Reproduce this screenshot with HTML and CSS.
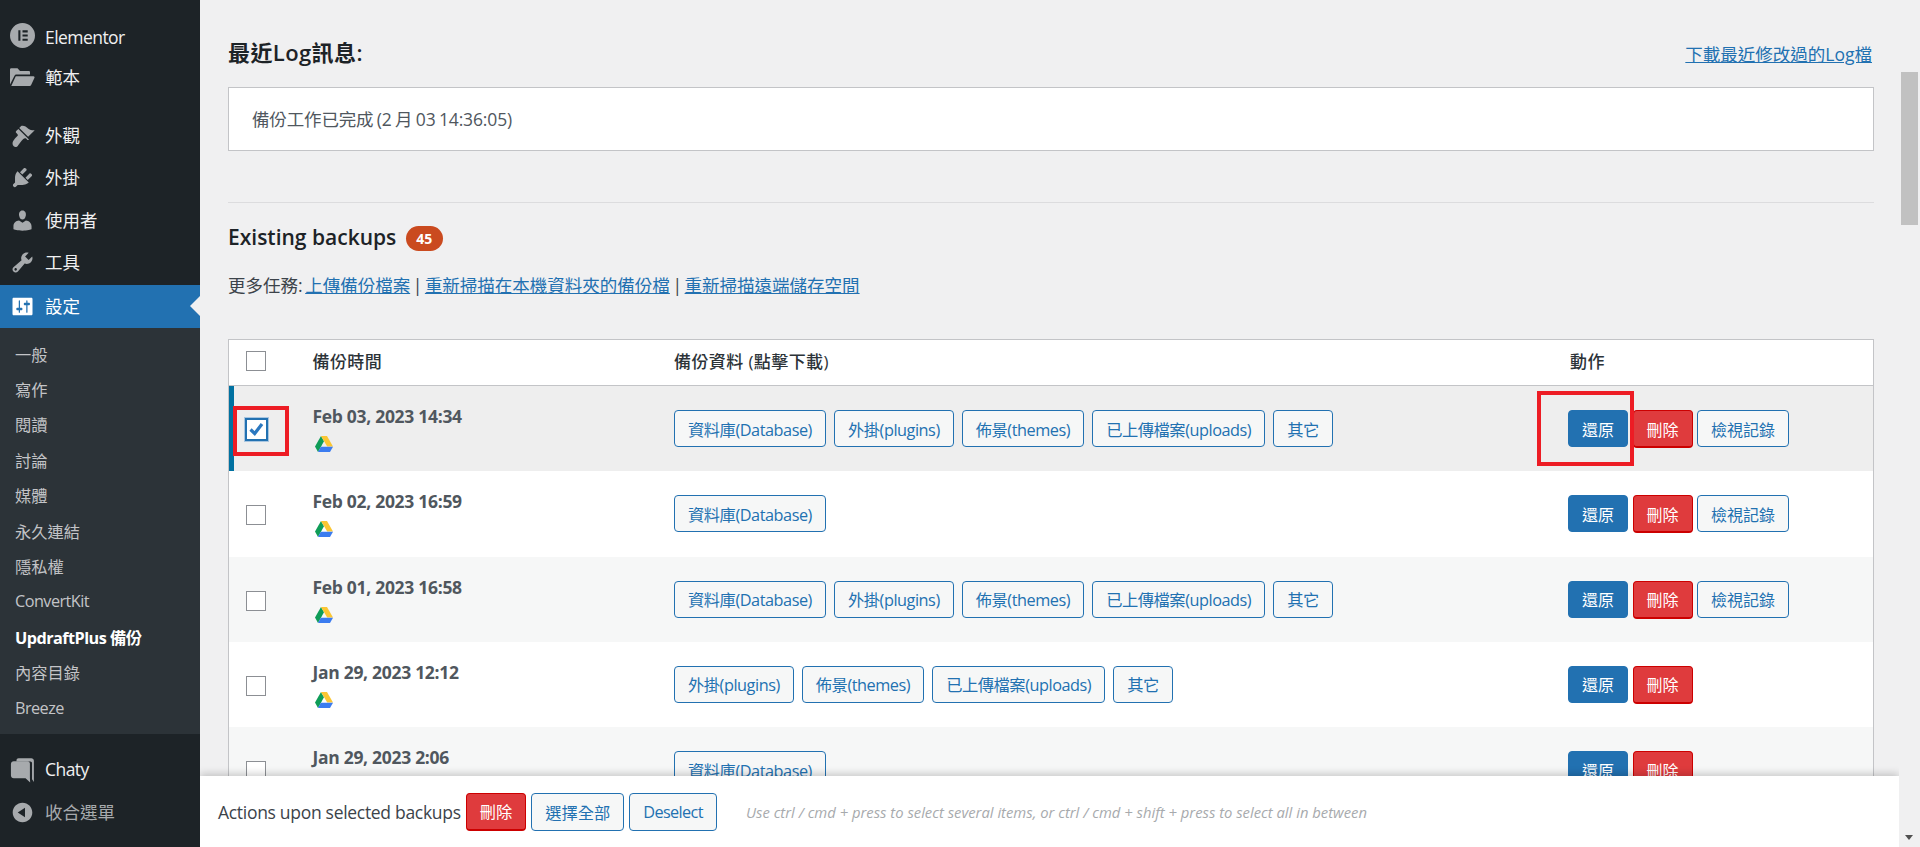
FILE: index.html
```html
<!DOCTYPE html>
<html lang="zh-Hant">
<head>
<meta charset="utf-8">
<title>UpdraftPlus 備份</title>
<link rel="stylesheet" href="styles.css">
</head>
<body>
<svg class="defs" width="0" height="0" aria-hidden="true">
  <symbol id="drive" viewBox="0 0 18 16">
    <polygon fill="#0f9d58" points="6,0 9,5.2 3,16 0,10.5"/>
    <polygon fill="#fbc633" points="6,0 12,0 18,10.5 12.2,10.5"/>
    <polygon fill="#3b7cf0" points="5.8,10.8 18,10.8 15,16 3,16"/>
  </symbol>
</svg>
<aside class="sidebar">
  <nav class="menu">
    <a class="item first"><svg class="ic" viewBox="0 0 24 24"><path fill="#a7aaad" fill-rule="evenodd" d="M12 0a12 12 0 1 0 0 24 12 12 0 0 0 0-24zM8 7h2v10H8zm4 0h5v2h-5zm0 4h5v2h-5zm0 4h5v2h-5z"/></svg><span class="lat">Elementor</span></a>
    <a class="item"><svg class="ic" viewBox="0 0 20 20"><path fill="#a7aaad" d="M0 3.500C0 3 .4 2.500 1 2.500h5l2 2.200h7c.6 0 1 .4 1 1V7.500H5.200c-.7 0-1.300.4-1.600 1L0 15.500zM4.600 9h14.200c.6 0 1 .6.800 1.100l-2.800 6c-.2.400-.6.600-1 .6H1z"/></svg><span>範本</span></a>
    <a class="item gap-top"><svg class="ic" viewBox="0 0 20 20"><path fill="#a7aaad" d="M14.480 11.060L7.410 3.990l1.500-1.500c.5-.56 2.300-.47 3.510.32 1.210.8 1.430 1.280 2.910 2.100 1.180.64 2.450 1.260 4.450.85zm-.71.71L6.700 4.700 4.930 6.470c-.39.39-.39 1.020 0 1.410l1.060 1.060c.39.39.39 1.030 0 1.420-.6.6-6.120 5.200-3.010 8.310 1.400 1.400 2.800.1 3.400-.5.600-.6 3.900-5.600 5.100-5.700.39-.39 1.030-.39 1.420 0l.88.9c.39.39 1.020.39 1.410 0z"/></svg><span>外觀</span></a>
    <a class="item"><svg class="ic" viewBox="0 0 20 20"><path fill="#a7aaad" d="M13.110 4.360L9.870 7.600 8 5.730l3.240-3.240c.35-.34 1.050-.2 1.560.32.52.51.66 1.210.31 1.550zm-8 1.770l.91-1.120 9.010 9.010-1.190.84c-.71.71-2.630 1.160-3.820 1.160H6.140L4.900 17.260c-.59.59-1.540.59-2.120 0-.59-.58-.59-1.530 0-2.120l1.240-1.240v-3.880c0-1.130.4-3.190 1.090-3.890zm7.260 3.970l3.240-3.240c.34-.35 1.040-.21 1.550.31.52.51.66 1.210.31 1.550l-3.240 3.250z"/></svg><span>外掛</span></a>
    <a class="item"><svg class="ic" viewBox="0 0 20 20"><path fill="#a7aaad" d="M10 9.250c-2.270 0-2.730-3.440-2.730-3.440C7 4.020 7.820 2 9.970 2c2.160 0 2.980 2.020 2.710 3.810 0 0-.41 3.440-2.680 3.440zm0 2.570L12.720 10c2.390 0 4.520 2.330 4.520 4.530v2.490s-3.650 1.130-7.240 1.130c-3.650 0-7.240-1.130-7.240-1.130v-2.490c0-2.250 1.940-4.480 4.470-4.480z"/></svg><span>使用者</span></a>
    <a class="item"><svg class="ic" viewBox="0 0 20 20"><path fill="#a7aaad" d="M16.680 9.770c-1.340 1.340-3.300 1.670-4.950.99l-5.410 6.520c-.99.99-2.590.99-3.580 0s-.99-2.590 0-3.570l6.520-5.420c-.68-1.650-.35-3.610.99-4.950 1.280-1.280 3.120-1.620 4.720-1.060l-2.890 2.890 2.820 2.820 2.860-2.870c.53 1.580.18 3.390-1.080 4.650zM3.810 16.210c.4.39 1.040.39 1.430 0 .4-.4.4-1.040 0-1.430-.39-.4-1.030-.4-1.430 0-.39.39-.39 1.030 0 1.430z"/></svg><span>工具</span></a>
    <a class="item active"><svg class="ic" viewBox="0 0 20 20"><path fill="#fff" d="M18 16V4c0-.55-.45-1-1-1H3c-.55 0-1 .45-1 1v12c0 .55.45 1 1 1h14c.55 0 1-.45 1-1zM8 11h1c.55 0 1 .45 1 1s-.45 1-1 1H8v1.500c0 .28-.22.5-.5.5s-.5-.22-.5-.5V13H6c-.55 0-1-.45-1-1s.45-1 1-1h1V5.500c0-.28.22-.5.5-.5s.5.22.5.5V11zm5-2h-1c-.55 0-1-.45-1-1s.45-1 1-1h1V5.500c0-.28.22-.5.5-.5s.5.22.5.5V7h1c.55 0 1 .45 1 1s-.45 1-1 1h-1v5.500c0 .28-.22.5-.5.5s-.5-.22-.5-.5V9z"/></svg><span>設定</span></a>
    <div class="submenu">
      <a>一般</a><a>寫作</a><a>閱讀</a><a>討論</a><a>媒體</a><a>永久連結</a><a>隱私權</a><a class="lat">ConvertKit</a><a class="current lat">UpdraftPlus 備份</a><a>內容目錄</a><a class="lat">Breeze</a>
    </div>
    <a class="item gap-top"><svg class="ic" viewBox="0 0 25 27"><path fill="#a7aaad" d="M6 2.500C6 1.100 7 .3 8.300.3H22c1.600 0 2.800 1.100 2.800 2.700v23l-2-3V5.500c0-1-.7-1.800-1.800-1.800H6z"/><path fill="#a7aaad" d="M3 3.500H18c1.400 0 2.500 1.100 2.500 2.500v16l.3 4.500-5-4.500H3C1.300 22 0 20.700 0 19V6.500c0-1.700 1.300-3 3-3z"/></svg><span class="lat">Chaty</span></a>
    <a class="item collapse"><svg class="ic" viewBox="0 0 20 20"><path fill="#a7aaad" d="M10 2.160c4.330 0 7.840 3.510 7.840 7.840s-3.510 7.840-7.840 7.840S2.160 14.330 2.160 10 5.710 2.160 10 2.160zm2 11.720V6.120L6.180 9.970z"/></svg><span>收合選單</span></a>
  </nav>
</aside>
<main class="main">
  <div class="content">
    <div class="log-head">
      <h3 class="title">最近Log訊息:</h3>
      <a class="link">下載最近修改過的Log檔</a>
    </div>
    <div class="log-box">備份工作已完成 (2 月 03 14:36:05)</div>
    <hr class="rule">
    <h3 class="title existing">Existing backups <span class="badge">45</span></h3>
    <p class="tasks">更多任務: <a class="link">上傳備份檔案</a> | <a class="link">重新掃描在本機資料夾的備份檔</a> | <a class="link">重新掃描遠端儲存空間</a></p>
    <table class="backups">
      <colgroup><col class="c1"><col class="c2"><col class="c3"><col></colgroup>
      <thead>
        <tr><th><span class="box"></span></th><th>備份時間</th><th>備份資料 (點擊下載)</th><th class="th-act">動作</th></tr>
      </thead>
      <tbody>
        <tr class="selected">
          <td class="check"><span class="box checked"><svg viewBox="0 0 19 19"><path fill="none" stroke="#2b78c0" stroke-width="3.200" d="M3.500 9.500l4.200 4L15 4"/></svg></span></td>
          <td class="when"><strong>Feb 03, 2023 14:34</strong><svg class="drive"><use href="#drive"/></svg></td>
          <td class="files"><a class="btn">資料庫(Database)</a><a class="btn">外掛(plugins)</a><a class="btn">佈景(themes)</a><a class="btn">已上傳檔案(uploads)</a><a class="btn">其它</a></td>
          <td class="acts"><a class="btn primary">還原</a><a class="btn danger">刪除</a><a class="btn">檢視記錄</a></td>
        </tr>
        <tr>
          <td class="check"><span class="box"></span></td>
          <td class="when"><strong>Feb 02, 2023 16:59</strong><svg class="drive"><use href="#drive"/></svg></td>
          <td class="files"><a class="btn">資料庫(Database)</a></td>
          <td class="acts"><a class="btn primary">還原</a><a class="btn danger">刪除</a><a class="btn">檢視記錄</a></td>
        </tr>
        <tr class="alt">
          <td class="check"><span class="box"></span></td>
          <td class="when"><strong>Feb 01, 2023 16:58</strong><svg class="drive"><use href="#drive"/></svg></td>
          <td class="files"><a class="btn">資料庫(Database)</a><a class="btn">外掛(plugins)</a><a class="btn">佈景(themes)</a><a class="btn">已上傳檔案(uploads)</a><a class="btn">其它</a></td>
          <td class="acts"><a class="btn primary">還原</a><a class="btn danger">刪除</a><a class="btn">檢視記錄</a></td>
        </tr>
        <tr>
          <td class="check"><span class="box"></span></td>
          <td class="when"><strong>Jan 29, 2023 12:12</strong><svg class="drive"><use href="#drive"/></svg></td>
          <td class="files"><a class="btn">外掛(plugins)</a><a class="btn">佈景(themes)</a><a class="btn">已上傳檔案(uploads)</a><a class="btn">其它</a></td>
          <td class="acts"><a class="btn primary">還原</a><a class="btn danger">刪除</a></td>
        </tr>
        <tr class="alt">
          <td class="check"><span class="box"></span></td>
          <td class="when"><strong>Jan 29, 2023 2:06</strong><svg class="drive"><use href="#drive"/></svg></td>
          <td class="files"><a class="btn">資料庫(Database)</a></td>
          <td class="acts"><a class="btn primary">還原</a><a class="btn danger">刪除</a></td>
        </tr>
      </tbody>
    </table>
  </div>
  <div class="mark mark-check"></div>
  <div class="mark mark-restore"></div>
  <div class="actionbar">
    <span class="ab-label">Actions upon selected backups</span>
    <a class="btn danger">刪除</a><a class="btn">選擇全部</a><a class="btn tight">Deselect</a>
    <em class="ab-hint">Use ctrl / cmd + press to select several items, or ctrl / cmd + shift + press to select all in between</em>
  </div>
</main>
<div class="scrollbar"><div class="thumb"></div><div class="arrow"></div></div>
</body>
</html>
```

FILE: styles.css
```css
* { box-sizing: border-box; }
html, body { margin: 0; height: 847px; overflow: hidden; }
body {
  display: flex;
  background: #f0f0f1;
  color: #3c434a;
  font-family: "Open Sans", "Noto Sans CJK TC", sans-serif;
  font-size: 17.5px;
}
.defs { position: absolute; }
a { text-decoration: none; }

/* Sidebar */
.sidebar { width: 200px; flex: none; background: #1d2327; padding-top: 14px; position: relative; z-index: 2; }
.item { display: flex; align-items: center; height: 42.5px; color: #f0f0f1; position: relative; font-size: 17.5px; }
.item .ic { width: 25px; height: 25px; margin: 0 10px 0 10px; flex: none; }
.item span { padding-bottom: 2px; }
.item.first { height: 41.5px; margin-top: 1px; }
.item.first span { padding: 2px 0 0; }
.lat { letter-spacing: -.55px; }
.gap-top { margin-top: 15px; }
.active { margin-top: 1px; height: 43px; background: #2271b1; color: #fff; }
.active::after {
  content: ""; position: absolute; right: 0; top: 11px;
  border: 10px solid transparent; border-left-width: 0; border-right-color: #f0f0f1;
}
.collapse { color: #a7aaad; }
.submenu { background: #2c3338; padding: 9.5px 0 7px; }
.submenu a { display: flex; align-items: center; height: 35.4px; padding: 0 0 3px 15px; color: #c3c4c7; font-size: 16.25px; }
.submenu a.current { color: #fff; font-weight: 700; }

/* Main */
.main { flex: 1; min-width: 0; position: relative; overflow: hidden; }
.content { padding: 36px 25px 0 28px; }
.log-head { display: flex; justify-content: space-between; align-items: center; height: 34px; }
.title { margin: 0; font-size: 21px; line-height: 34px; font-weight: 600; color: #1d2327; }
.log-head .title { padding-bottom: 2px; font-size: 22px; letter-spacing: .4px; }
.log-head .link { margin-right: 2px; }
.link { color: #2271b1; text-decoration: underline; }
.log-box { margin-top: 17px; height: 64px; display: flex; align-items: center; padding: 0 23px 2px; background: #fff; border: 1px solid #c3c4c7; color: #50575e; letter-spacing: -.15px; word-spacing: -1px; }
.rule { margin: 51px 0 0; border: 0; border-top: 1px solid #dcdcde; height: 1px; }
.existing { margin-top: 17px; display: flex; align-items: center; gap: 4px; white-space: pre; }
.badge { display: inline-flex; align-items: center; justify-content: center; width: 37px; height: 25px; border-radius: 13px; background: #ca4a1f; color: #fff; font-size: 14px; font-weight: 700; margin-top: 3px; }
.tasks { margin: 19px 0 0; line-height: 24px; color: #3c434a; word-spacing: -2px; }

/* Table */
.backups { margin-top: 42px; width: 100%; table-layout: fixed; border-collapse: separate; border-spacing: 0; border: 1px solid #c3c4c7; background: #fff; }
.c1 { width: 83.5px; }
.c2 { width: 361.5px; }
.c3 { width: 894px; }
.backups th { height: 46px; padding: 0 0 4px; text-align: left; font-size: 17px; font-weight: 500; color: #2c3338; letter-spacing: .4px; border-bottom: 1px solid #c3c4c7; background: #fff; }
.backups th:first-child { padding: 0 0 2px 17px; }
.th-act { padding-left: 2px !important; }
.backups td { height: 85.25px; padding: 0; vertical-align: top; }
.selected td { background: #eee; }
.selected .check { box-shadow: inset 5px 0 #0071a1; }
.alt td { background: #f6f7f7; }
.check { padding: 35px 0 0 17px !important; }
.box { display: block; width: 20px; height: 20px; background: #fff; border: 1px solid #8c8f94; margin-top: -1px; }
.box.checked { width: 23px; height: 23px; border: 2px solid #2271b1; outline: 1px solid #a9c6e0; margin: -3.5px 0 0 -1px; }
.box.checked svg { display: block; width: 19px; height: 19px; }
.when { padding-top: 18px !important; }
.when strong { display: block; line-height: 24px; font-size: 17.5px; font-weight: 700; letter-spacing: -.3px; color: #50575e; }
.drive { display: block; width: 18px; height: 16px; margin: 8px 0 0 2px; }
.files, .acts { padding-top: 24px !important; }
.files .btn { margin-right: 8px; letter-spacing: -.45px; }
.acts .btn { margin-right: 4.5px; font-size: 16px; }

.btn {
  display: inline-flex; align-items: center; justify-content: center;
  height: 37px; padding: 0 13px; border: 1px solid #2271b1; border-radius: 4px;
  background: #f6f7f7; color: #2271b1; font-size: 16.25px; vertical-align: top; white-space: nowrap;
}
.primary { background: #2271b1; color: #fff; }
.danger { height: 38px; background: #df3b3d; border-color: #c00; border-bottom-width: 2px; color: #fff; }
.tight { letter-spacing: -.6px; }

/* Annotations */
.mark { position: absolute; border: 4px solid #ed1c24; }
.mark-check { left: 33px; top: 406px; width: 56px; height: 50px; }
.mark-restore { left: 1337px; top: 391px; width: 97px; height: 75px; }

/* Bottom bar */
.actionbar {
  position: absolute; left: 0; right: 0; bottom: 0; height: 71px;
  display: flex; align-items: center; padding: 0 0 0 18px;
  background: #fff; box-shadow: 0 -2px 8px rgba(0,0,0,.2);
}
.ab-label { margin-right: 5px; color: #3c434a; letter-spacing: -.3px; }
.actionbar .btn { margin-right: 5px; }
.actionbar .btn:not(.danger) { height: 38px; }
.ab-hint { margin-left: 24px; font-size: 14.8px; color: #a7aaad; }

/* Scrollbar */
.scrollbar { width: 21px; flex: none; padding: 72px 2px 0 2px; position: relative; background: #f0f0f1; }
.thumb { height: 153px; background: #c1c1c1; }
.arrow { position: absolute; left: 6px; bottom: 7px; border: 4.5px solid transparent; border-bottom-width: 0; border-top: 5px solid #505050; }
```
